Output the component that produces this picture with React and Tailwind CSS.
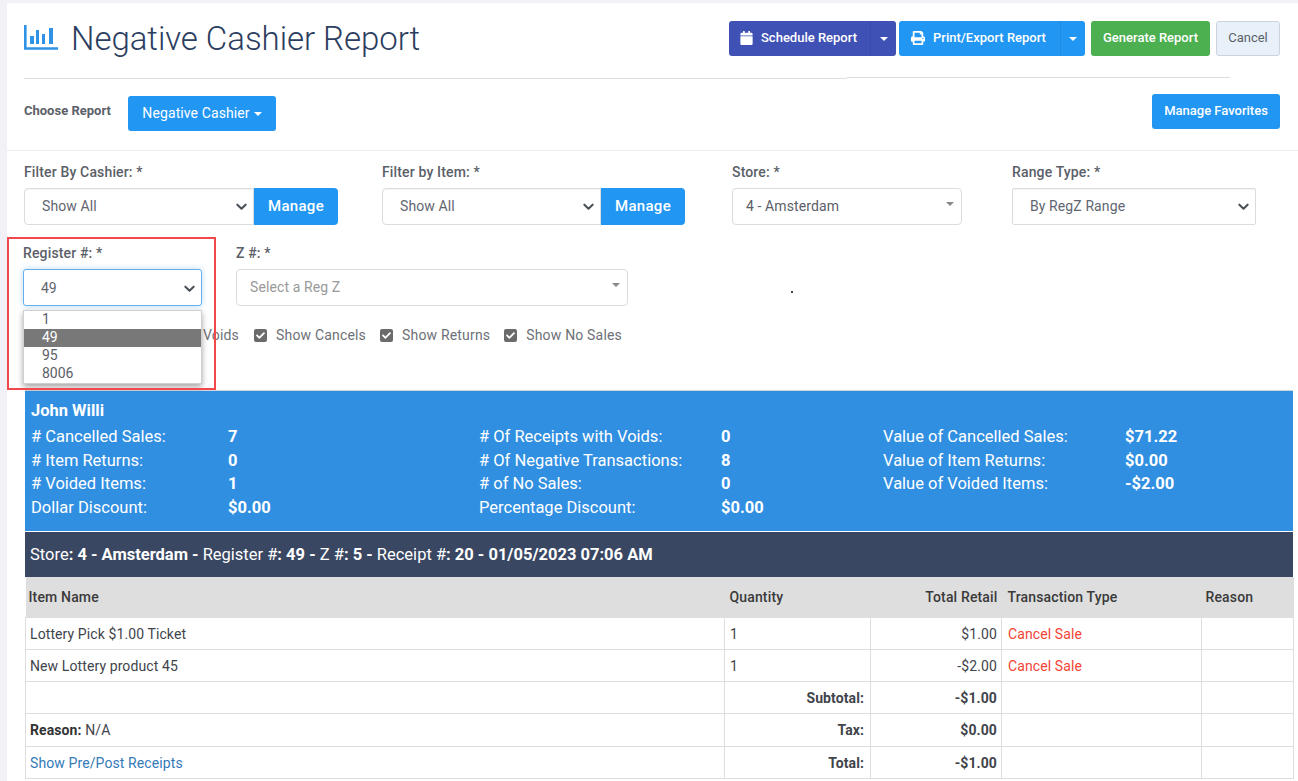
import React from "react";
import { FaCalendar, FaPrint, FaCheck } from "react-icons/fa";

const Caret = ({ className = "" }) => (
  <svg viewBox="0 0 10 5" className={`w-[8px] h-[4px] ${className}`}><path d="M0 0h10L5 5z" fill="currentColor" /></svg>
);
const Chevron = () => (
  <svg viewBox="0 0 12 12" className="w-[11px] h-[11px] text-[#4a5058] shrink-0"><path d="M1.5 4 6 8.5 10.5 4" fill="none" stroke="currentColor" strokeWidth="2.2" strokeLinecap="round" strokeLinejoin="round" /></svg>
);
const ChartIcon = () => (
  <svg viewBox="0 0 34 25" className="w-[34px] h-[25px] text-[#2e93e6] -mt-[3px]">
    <path d="M1.3 0v23.5H34" fill="none" stroke="currentColor" strokeWidth="2.6" />
    <rect x="6" y="11" width="4" height="8" fill="currentColor" />
    <rect x="12" y="5" width="3" height="14" fill="currentColor" />
    <rect x="18" y="9" width="3" height="10" fill="currentColor" />
    <rect x="25" y="3" width="4" height="16" fill="currentColor" />
  </svg>
);

const Label = ({ children }) => (
  <div className="text-[14px] leading-[16px] font-medium text-[#5b6068] tracking-[0.15px] mb-[8px]">{children}</div>
);
const NativeBox = ({ text, className = "" }) => (
  <div className={`h-[37px] border border-[#dcdcdc] bg-white flex items-center justify-between text-[14px] tracking-[0.1px] text-[#5f6670] shadow-[inset_0_1px_1px_rgba(0,0,0,0.05)] ${className}`}>
    <span>{text}</span>
    <Chevron />
  </div>
);
const Manage = () => (
  <div className="w-[84px] h-[37px] bg-[#2196f3] text-white text-[15px] font-medium tracking-[0.3px] rounded-r-[4px] flex items-center justify-center">Manage</div>
);
const Check1 = ({ label }) => (
  <div className="flex items-center gap-[9px]">
    <span className="w-[13px] h-[13px] rounded-[2px] bg-[#6b6b6b] flex items-center justify-center"><FaCheck className="w-[9px] h-[9px] text-white" /></span>
    <span className="text-[14px] tracking-[0.18px] text-[#6d7177]">{label}</span>
  </div>
);
const Stat = ({ label, value }) => (
  <>
    <div>{label}</div>
    <div className="font-bold">{value}</div>
  </>
);

const stats = [
  ["# Cancelled Sales:", "7", "# Of Receipts with Voids:", "0", "Value of Cancelled Sales:", "$71.22"],
  ["# Item Returns:", "0", "# Of Negative Transactions:", "8", "Value of Item Returns:", "$0.00"],
  ["# Voided Items:", "1", "# of No Sales:", "0", "Value of Voided Items:", "-$2.00"],
  ["Dollar Discount:", "$0.00", "Percentage Discount:", "$0.00", "", ""],
];

const Td = ({ className = "", children, colSpan }) => (
  <td colSpan={colSpan} className={`border border-[#dedede] px-[4px] pt-[2px] text-[14px] tracking-[0.1px] text-[#3f444b] ${className}`}>{children}</td>
);

const Option = ({ children, active }) => (
  <div className={`pl-[18px] h-[18px] leading-[16px] ${active ? "bg-[#787878] text-white" : ""}`}>{children}</div>
);

export default function App() {
  return (
    <div className="w-[1298px] h-[781px] overflow-hidden bg-[#f1f1f7] pt-[3px] pl-[7px] font-['Roboto',sans-serif]">
      <div className="bg-white h-[778px] relative">
        {/* Header */}
        <div className="mx-[17px] w-[1206px] h-[74px] flex items-start">
          <div className="flex items-center mt-[18px]">
            <ChartIcon />
            <h1 className="ml-[13px] text-[33px] leading-[36px] font-light text-[#2c3e5f] tracking-[-0.05px]">Negative Cashier Report</h1>
          </div>
          <div className="ml-auto mt-[18px] flex -mr-[50px]">
            <div className="w-[167px] h-[35px] bg-[#3f51b5] text-white rounded-[3px] flex items-center text-[13px] font-medium">
              <FaCalendar className="w-[13px] h-[14px] ml-[11px] mr-[8px] -mt-[2px] text-white" />
              <span className="-mt-[2px]">Schedule Report</span>
              <div className="ml-auto w-[26px] h-full border-l border-[#3a4aa8] flex items-center justify-center"><Caret /></div>
            </div>
            <div className="ml-[3px] w-[186px] h-[35px] bg-[#2196f3] text-white rounded-[3px] flex items-center text-[13px] font-medium">
              <FaPrint className="w-[14px] h-[14px] ml-[12px] mr-[8px] -mt-[2px] text-white" />
              <span className="-mt-[2px]">Print/Export Report</span>
              <div className="ml-auto w-[25px] h-full border-l border-[#1e8ce4] flex items-center justify-center"><Caret /></div>
            </div>
            <div className="ml-[6px] w-[119px] h-[35px] pb-[2px] bg-[#4caf50] text-white rounded-[3px] flex items-center justify-center text-[13px] font-medium">Generate Report</div>
            <div className="ml-[6px] w-[64px] h-[35px] pb-[2px] bg-[#e8f1fa] border border-[#ccd3da] text-[#5b6068] rounded-[3px] flex items-center justify-center text-[13px]">Cancel</div>
          </div>
        </div>
        <div className="mx-[17px] flex items-start h-[2px]">
          <div className="w-[823px] h-px mt-px bg-[#dedede]" />
          <div className="w-[383px] h-px bg-[#dedede]" />
        </div>

        {/* Choose report */}
        <div className="h-[71px] mx-[17px] w-[1256px] flex items-start">
          <div className="mt-[24px] text-[13px] leading-[16px] font-bold text-[#5b6068] w-[104px]">Choose Report</div>
          <div className="mt-[17px] w-[148px] h-[35px] bg-[#2196f3] text-white rounded-[3px] flex items-center justify-center gap-[4px] text-[14px] tracking-[0.1px]">
            Negative Cashier <Caret />
          </div>
          <div className="ml-auto mt-[15px] w-[128px] h-[35px] pb-[2px] bg-[#2196f3] text-white rounded-[3px] flex items-center justify-center text-[13px] font-medium whitespace-nowrap">Manage Favorites</div>
        </div>
        <div className="h-px bg-[#ececec]" />

        {/* Filters row 1 */}
        <div className="pl-[17px] pt-[13px] flex h-[85px]">
          <div className="w-[358px]">
            <Label>Filter By Cashier: *</Label>
            <div className="flex w-[314px]">
              <NativeBox text="Show All" className="w-[230px] rounded-l-[4px] pl-[17px] pr-[6px]" />
              <Manage />
            </div>
          </div>
          <div className="w-[350px]">
            <Label>Filter by Item: *</Label>
            <div className="flex w-[303px]">
              <NativeBox text="Show All" className="w-[219px] rounded-l-[4px] pl-[17px] pr-[6px]" />
              <Manage />
            </div>
          </div>
          <div className="w-[280px]">
            <Label>Store: *</Label>
            <div className="w-[230px] h-[37px] border border-[#dcdcdc] rounded-[4px] flex items-center justify-between pl-[13px] pr-[7px] text-[14px] tracking-[0.1px] text-[#5b6068]">
              <span>4 - Amsterdam</span>
              <Caret className="text-[#888] -mt-[5px]" />
            </div>
          </div>
          <div>
            <Label>Range Type: *</Label>
            <NativeBox text="By RegZ Range" className="w-[244px] rounded-[2px] pl-[17px] pr-[6px]" />
          </div>
        </div>

        {/* Filters row 2 */}
        <div className="pl-[16px] pt-[9px] flex h-[73px]">
          <div className="w-[213px]">
            <Label>Register #: *</Label>
            <div className="w-[179px] h-[37px] pt-[1px] border border-[#66afe9] rounded-[3px] bg-white flex items-center justify-between pl-[17px] pr-[6px] text-[14px] text-[#5f6670] shadow-[0_0_6px_rgba(102,175,233,0.45)]">
              <span>49</span>
              <Chevron />
            </div>
          </div>
          <div>
            <Label>Z #: *</Label>
            <div className="w-[392px] h-[37px] border border-[#dcdcdc] rounded-[4px] flex items-center justify-between pl-[13px] pr-[7px] text-[14px] tracking-[0.1px] text-[#999]">
              <span>Select a Reg Z</span>
              <Caret className="text-[#888] -mt-[5px]" />
            </div>
          </div>
          <div className="ml-[163px] mt-[46px] w-[2px] h-[2px] bg-[#444]" />
        </div>

        {/* Checkboxes */}
        <div className="h-[81px] pl-[196px] pt-[14px] flex items-start gap-[15px]">
          <span className="text-[14px] tracking-[0.18px] text-[#6d7177] w-[36px] leading-[24px]">Voids</span>
          <div className="flex items-center h-[24px] gap-[14px]">
            <Check1 label="Show Cancels" />
            <Check1 label="Show Returns" />
            <Check1 label="Show No Sales" />
          </div>
        </div>

        {/* Summary */}
        <div className="ml-[18px] w-[1268px] border-t border-[#cfd6dd]">
          <div className="bg-[#318fe2] text-white h-[140px] pl-[6px] pt-[8px] text-[16.5px] leading-[23.6px]">
            <div className="font-bold">John Willi</div>
            <div className="grid grid-cols-[197px_251px_242px_162px_242px_1fr] mt-[2.4px]">
              {stats.map((r, i) => (
                <React.Fragment key={i}>
                  <Stat label={r[0]} value={r[1]} />
                  <Stat label={r[2]} value={r[3]} />
                  <Stat label={r[4]} value={r[5]} />
                </React.Fragment>
              ))}
            </div>
          </div>
          <div className="mt-px h-[45px] pt-[2px] bg-[#3a4763] text-white text-[16.5px] flex items-center pl-[5px]">
            <span>Store<b>: 4 - Amsterdam - </b>Register #<b>: 49 - </b>Z #<b>: 5 - </b>Receipt #<b>: 20 - 01/05/2023 07:06 AM</b></span>
          </div>
          <table className="w-[1268px] table-fixed border-collapse">
            <colgroup>
              <col className="w-[699px]" />
              <col className="w-[146px]" />
              <col className="w-[131px]" />
              <col className="w-[200px]" />
              <col className="w-[92px]" />
            </colgroup>
            <thead>
              <tr className="h-[40px] bg-[#dedede] text-[14px] tracking-[0.15px] text-[#3a3a3a]">
                <th className="text-left font-medium px-[3px] pt-[2px]">Item Name</th>
                <th className="text-left font-medium px-[5px] pt-[2px]">Quantity</th>
                <th className="text-right font-medium px-[4px] pt-[2px]">Total Retail</th>
                <th className="text-left font-medium px-[6px] pt-[2px]">Transaction Type</th>
                <th className="text-left font-medium px-[4px] pt-[2px]">Reason</th>
              </tr>
            </thead>
            <tbody>
              <tr className="h-[32px]">
                <Td>Lottery Pick $1.00 Ticket</Td>
                <Td className="px-[5px]">1</Td>
                <Td className="text-right">$1.00</Td>
                <Td className="px-[6px] text-[#f44336]">Cancel Sale</Td>
                <Td />
              </tr>
              <tr className="h-[32px]">
                <Td>New Lottery product 45</Td>
                <Td className="px-[5px]">1</Td>
                <Td className="text-right">-$2.00</Td>
                <Td className="px-[6px] text-[#f44336]">Cancel Sale</Td>
                <Td />
              </tr>
              <tr className="h-[32px]">
                <Td />
                <Td className="text-right font-bold pr-[6px]">Subtotal:</Td>
                <Td className="text-right font-bold">-$1.00</Td>
                <Td />
                <Td />
              </tr>
              <tr className="h-[33px]">
                <Td><b className="text-[#333]">Reason:</b> N/A</Td>
                <Td className="text-right font-bold pr-[6px]">Tax:</Td>
                <Td className="text-right font-bold">$0.00</Td>
                <Td />
                <Td />
              </tr>
              <tr className="h-[32px]">
                <Td className="text-[#337ab7]">Show Pre/Post Receipts</Td>
                <Td className="text-right font-bold pr-[6px]">Total:</Td>
                <Td className="text-right font-bold">-$1.00</Td>
                <Td />
                <Td />
              </tr>
            </tbody>
          </table>
        </div>

        {/* Open dropdown */}
        <div className="absolute left-[16px] top-[307px] w-[179px] bg-white border border-[#cfcfcf] shadow-[0_3px_6px_rgba(0,0,0,0.35)] text-[14px] text-[#5b6068]">
          <Option>1</Option>
          <Option active>49</Option>
          <Option>95</Option>
          <Option>8006</Option>
        </div>
        {/* Annotation frame */}
        <div className="absolute left-0 top-[234px] w-[209px] h-[153px] border-2 border-[#f2484b] pointer-events-none" />
      </div>
    </div>
  );
}
